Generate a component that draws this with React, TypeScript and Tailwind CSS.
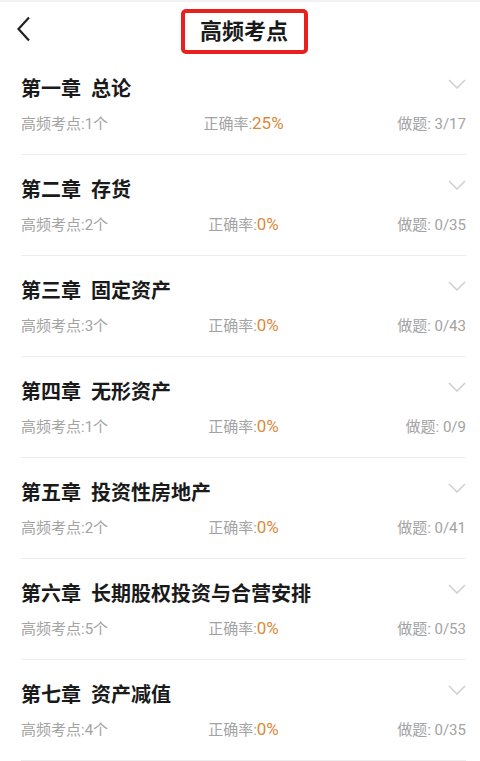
import React from "react";

type Chapter = {
  no: string;
  name: string;
  points: number;
  rate: string;
  done: string;
};

const chapters: Chapter[] = [
  { no: "第一章", name: "总论", points: 1, rate: "25%", done: "3/17" },
  { no: "第二章", name: "存货", points: 2, rate: "0%", done: "0/35" },
  { no: "第三章", name: "固定资产", points: 3, rate: "0%", done: "0/43" },
  { no: "第四章", name: "无形资产", points: 1, rate: "0%", done: "0/9" },
  { no: "第五章", name: "投资性房地产", points: 2, rate: "0%", done: "0/41" },
  { no: "第六章", name: "长期股权投资与合营安排", points: 5, rate: "0%", done: "0/53" },
  { no: "第七章", name: "资产减值", points: 4, rate: "0%", done: "0/35" },
];

function Chevron() {
  return (
    <svg width="18" height="10" viewBox="0 0 18 10" className="mt-[4px] shrink-0">
      <path d="M1 1 L9 9 L17 1" fill="none" stroke="#cfcfcf" strokeWidth="1.5" />
    </svg>
  );
}

function ChapterRow({ c }: { c: Chapter }) {
  return (
    <div className="ml-[21px] mr-[14px] h-[101px] border-b border-[#ededed] pt-[21px]">
      <div className="flex h-[28px] items-start justify-between">
        <h4 className="text-[20px] font-bold leading-[28px] text-[#1a1a1a]">
          {c.no}
          <span className="ml-[10px]">{c.name}</span>
        </h4>
        <Chevron />
      </div>
      <div className="mt-[10px] grid h-[20px] grid-cols-3 items-center text-[15px] leading-[20px] text-[#a3a3a3]">
        <span>高频考点:{c.points}个</span>
        <span className="text-center">
          正确率:<span className="text-[17px] leading-[20px] text-[#db8a3a]">{c.rate}</span>
        </span>
        <span className="text-right">做题: {c.done}</span>
      </div>
    </div>
  );
}

export default function App() {
  return (
    <div
      className="h-[761px] w-[480px] overflow-hidden bg-white"
      style={{ fontFamily: 'Roboto, "Noto Sans CJK SC", sans-serif' }}
    >
      <div className="h-[2px] bg-[#f1f1f1]" />
      <header className="relative flex h-[52px] items-start justify-center pl-[8px] pt-[7px]">
        <svg width="16" height="26" viewBox="0 0 16 26" className="absolute left-[16px] top-[14px]">
          <path d="M13 1.5 L2.5 13 L13 24.5" fill="none" stroke="#222" strokeWidth="2.2" />
        </svg>
        <div className="z-10 flex h-[45px] w-[127px] items-center justify-center rounded-[5px] border-4 border-[#e8211c] bg-white">
          <span className="text-[22px] font-bold text-[#1a1a1a]">高频考点</span>
        </div>
      </header>
      {chapters.map((c) => (
        <ChapterRow key={c.no} c={c} />
      ))}
    </div>
  );
}
